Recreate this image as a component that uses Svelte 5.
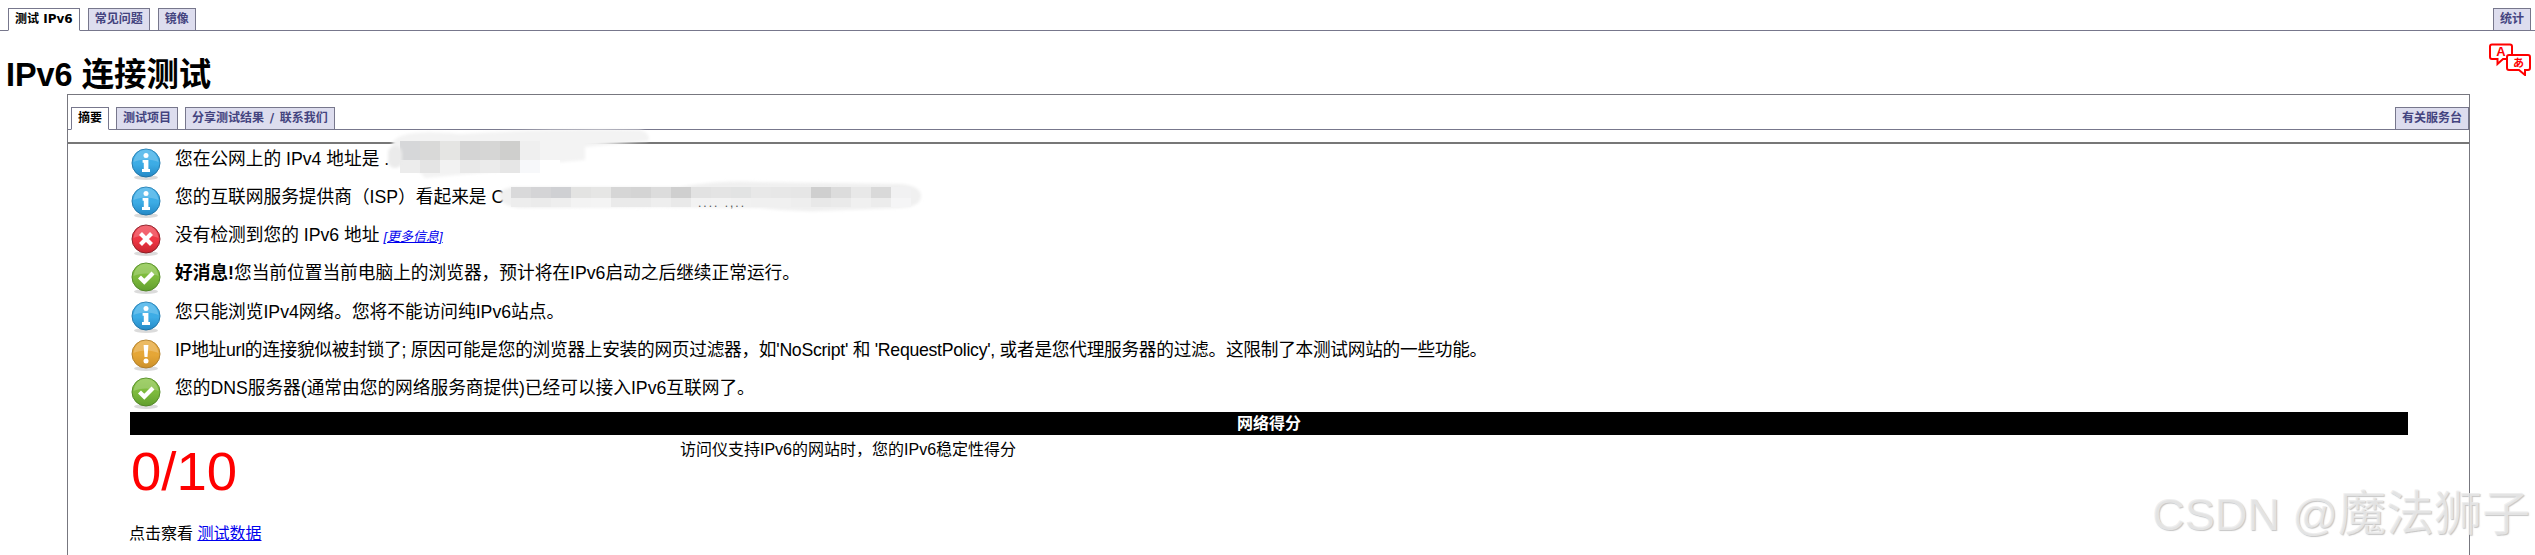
<script>
  const topTabs = ['常见问题', '镜像'];
  const subTabs = ['测试项目', '分享测试结果 / 联系我们'];
  const rows = [
    { icon: 'info', html: '您在公网上的 IPv4 地址是 .' },
    { icon: 'info', html: '您的互联网服务提供商（ISP）看起来是 C' },
    { icon: 'error', html: '没有检测到您的 IPv6 地址', more: true },
    { icon: 'ok', bold: '好消息!', html: '您当前位置当前电脑上的浏览器，预计将在IPv6启动之后继续正常运行。' },
    { icon: 'info', html: '您只能浏览IPv4网络。您将不能访问纯IPv6站点。' },
    { icon: 'warn', tight: true, html: "IP地址url的连接貌似被封锁了; 原因可能是您的浏览器上安装的网页过滤器，如'NoScript' 和 'RequestPolicy', 或者是您代理服务器的过滤。这限制了本测试网站的一些功能。" },
    { icon: 'ok', html: '您的DNS服务器(通常由您的网络服务商提供)已经可以接入IPv6互联网了。' }
  ];
  const mosaic1 = ['#d6d7d9', '#d9d9d8', '#e5e5e3', '#d4d4d4', '#d6d6d5', '#cfcfcd', '#efefef', '#f3f3f3'];
  const mosaic1b = ['#ececec', '#e4e4e4', '#f2f2f2', '#e8e8e8', '#ebebeb', '#e6e6e6', '#f7f8fa', '#ffffff'];
  const mosaic2 = ['#d9d9da', '#d4d4d6', '#cfd0d3', '#e3e3e2', '#e6e6e5', '#d6d6d6', '#d4d4d4', '#dcdcdc', '#cfcfcf', '#e2e2e2', '#e4e4e4', '#e2e3e3', '#e8e8e8', '#e7e7e7', '#e6e6e6', '#cfcfcf', '#dcdcdc', '#e8e8e8', '#d9d9d9', '#f1f1f2'];
  const mosaic2b = ['#ededed', '#ebebeb', '#eeeeee', '#f3f3f3', '#f4f4f4', '#eaeaea', '#eaeaea', '#eeeeee', '#e9e9e9', '#f2f2f2', '#f3f3f3', '#f1f1f1', '#f0f0f0', '#f0f0f0', '#eeeeee', '#e8e8e8', '#eaeaea', '#f0f0f0', '#ececec', '#f5f5f6'];
</script>

{#snippet statusIcon(kind)}
  <svg class="status" viewBox="0 0 32 34" width="32" height="34" aria-hidden="true">
    <ellipse cx="16" cy="30.5" rx="12" ry="2.6" fill="#000" opacity="0.14" />
    <circle cx="16" cy="16" r="14" fill="url(#g-{kind})" stroke="url(#e-{kind})" stroke-width="1" />
    <path d="M3.5 15 C5 6 11 2.6 16 2.6 C21 2.6 27 6 28.5 15 C22 11.5 10 11.5 3.5 15Z" fill="#fff" opacity="0.2" />
    {#if kind === 'info'}
      <circle cx="16" cy="8.6" r="2.5" fill="#fff" />
      <path d="M12.6 13 H18.4 V22 H20 V25 H12 V22 H13.8 V15.8 H12.6Z" fill="#fff" />
    {:else if kind === 'error'}
      <path d="M10.5 10.5 L21.5 21.5 M21.5 10.5 L10.5 21.5" stroke="#fff" stroke-width="4.2" />
    {:else if kind === 'ok'}
      <path d="M9.5 16 L14.3 20.8 L23 12" fill="none" stroke="#fff" stroke-width="4.2" />
    {:else}
      <path d="M13.6 7 H18.4 L17.5 19 H14.5Z" fill="#fff" />
      <circle cx="16" cy="23" r="2.5" fill="#fff" />
    {/if}
  </svg>
{/snippet}

<div class="page">
  <svg class="defs" width="0" height="0" aria-hidden="true">
    <defs>
      <linearGradient id="g-info" x1="0" y1="0" x2="0" y2="1"><stop offset="0" stop-color="#3fb0ea" /><stop offset="0.55" stop-color="#3dace5" /><stop offset="1" stop-color="#2489c6" /></linearGradient>
      <linearGradient id="e-info" x1="0" y1="0" x2="0" y2="1"><stop offset="0" stop-color="#2f86b8" /><stop offset="1" stop-color="#1f72a4" /></linearGradient>
      <linearGradient id="g-error" x1="0" y1="0" x2="0" y2="1"><stop offset="0" stop-color="#f04250" /><stop offset="0.55" stop-color="#ee3644" /><stop offset="1" stop-color="#c8252f" /></linearGradient>
      <linearGradient id="e-error" x1="0" y1="0" x2="0" y2="1"><stop offset="0" stop-color="#8f2730" /><stop offset="1" stop-color="#8a1d25" /></linearGradient>
      <linearGradient id="g-ok" x1="0" y1="0" x2="0" y2="1"><stop offset="0" stop-color="#8ac546" /><stop offset="0.55" stop-color="#7cb93c" /><stop offset="1" stop-color="#619e2e" /></linearGradient>
      <linearGradient id="e-ok" x1="0" y1="0" x2="0" y2="1"><stop offset="0" stop-color="#5b932d" /><stop offset="1" stop-color="#528628" /></linearGradient>
      <linearGradient id="g-warn" x1="0" y1="0" x2="0" y2="1"><stop offset="0" stop-color="#e8aa3e" /><stop offset="0.55" stop-color="#e5a636" /><stop offset="1" stop-color="#cc9029" /></linearGradient>
      <linearGradient id="e-warn" x1="0" y1="0" x2="0" y2="1"><stop offset="0" stop-color="#b68634" /><stop offset="1" stop-color="#ad7d2a" /></linearGradient>
    </defs>
  </svg>

  <nav class="tabs top">
    <span class="tab active first">测试 IPv6</span>
    {#each topTabs as t}<span class="tab">{t}</span>{/each}
    <span class="tab end">统计</span>
  </nav>

  <header class="head">
    <h1>IPv6 连接测试</h1>
    <svg class="lang" viewBox="0 0 44 33" width="44" height="33" aria-hidden="true">
      <path d="M4 1.5 H22 Q24 1.5 24 3.5 V14 Q24 16 22 16 H15 L9.5 21 V16 H4 Q2 16 2 14 V3.5 Q2 1.5 4 1.5Z" fill="#fff" stroke="#f00" stroke-width="2" />
      <text x="13" y="13" class="lang-a">A</text>
      <path d="M21 12 H40 Q42 12 42 14 V25 Q42 27 40 27 H37 V32 L31 27 H21 Q19 27 19 25 V14 Q19 12 21 12Z" fill="#fff" stroke="#f00" stroke-width="2" />
      <text x="30.5" y="24" class="lang-b">あ</text>
    </svg>
  </header>

  <section class="panel">
    <nav class="tabs sub">
      <span class="tab active">摘要</span>
      {#each subTabs as t}<span class="tab wide">{t}</span>{/each}
      <span class="tab end">有关服务台</span>
    </nav>
    <div class="rule"></div>

    <div class="rows">
      {#each rows as r}
        <div class="row">
          {@render statusIcon(r.icon)}
          <p class:tight={r.tight}>{#if r.bold}<strong>{r.bold}</strong>{/if}{r.html}{#if r.more} <a class="more" href="#more">[更多信息]</a>{/if}</p>
        </div>
      {/each}
    </div>

    <div class="bar">网络得分</div>
    <div class="score">
      <div class="num">0/10</div>
      <div class="desc">访问仪支持IPv6的网站时，您的IPv6稳定性得分</div>
    </div>
    <p class="data">点击察看 <a href="#data">测试数据</a></p>
  </section>

  <svg class="mask" width="2535" height="555" aria-hidden="true">
    <defs>
      <filter id="soft"><feGaussianBlur stdDeviation="1.4" /></filter>
    </defs>
    <path d="M392 143 Q400 128 460 134 Q560 128 640 130 Q652 134 648 141 L585 147 L585 160 L540 164 L490 172 L425 178 L420 172 L396 164 Z" fill="#f3f3f3" filter="url(#soft)" />
    {#each mosaic1 as c, i}<rect x={400 + i * 20} y="141" width="20" height="19" fill={c} />{/each}
    {#each mosaic1b as c, i}<rect x={400 + i * 20} y="160" width="20" height="13" fill={c} />{/each}
    <rect x="388" y="146" width="14" height="22" rx="7" fill="#ebebeb" filter="url(#soft)" />
    <path d="M499 195 Q502 186 520 187 L680 187 Q720 180 760 182 L900 184 Q922 186 921 197 Q920 207 900 208 L820 211 Q790 212 760 208 L660 207 L520 208 Q500 206 499 195Z" fill="#f0f0f0" filter="url(#soft)" />
    {#each mosaic2 as c, i}<rect x={511 + i * 20} y="187" width="20" height="11" fill={c} />{/each}
    {#each mosaic2b as c, i}<rect x={511 + i * 20} y="198" width="20" height="9" fill={c} />{/each}
    <text x="698" y="207" class="speck">.... .,..</text>
  </svg>

  <div class="mark"><span class="mark-l">CSDN @</span>魔法狮子</div>
</div>

<style>
  :global(body) {
    margin: 0;
    background: #fff;
  }

  .page {
    position: relative;
    height: 555px;
    overflow: hidden;
    background: #fff;
    color: #000;
    font-family: "Liberation Sans", "Noto Sans CJK SC", sans-serif;
  }

  .defs {
    position: absolute;
  }

  .tabs {
    display: flex;
    align-items: flex-end;
    gap: 8px;
    box-sizing: border-box;
    border-bottom: 1px solid #77778c;
    font-family: "DejaVu Sans", "Noto Sans CJK SC", sans-serif;
    font-size: 12px;
    font-weight: 700;
  }

  .top {
    height: 31px;
    padding: 8px 4px 0 5px;
  }

  .tab {
    box-sizing: border-box;
    height: 23px;
    margin-bottom: -1px;
    padding: 0 6px;
    border: 1px solid #77778c;
    background: #ddddee;
    color: #44447f;
    line-height: 21px;
    white-space: nowrap;
  }

  .tab.wide {
    word-spacing: 1.5px;
  }

  .tab.active {
    background: #fff;
    border-bottom-color: #fff;
    color: #000;
  }

  .tab.first {
    margin-left: 3px;
  }

  .tab.end {
    margin-left: auto;
  }

  .head {
    display: flex;
    justify-content: space-between;
    align-items: flex-start;
    height: 63px;
    padding: 0 3px 0 6px;
  }

  h1 {
    margin: 23px 0 0;
    font-size: 32.4px;
    line-height: 42px;
    font-weight: 700;
  }

  .lang {
    margin-top: 12px;
  }

  .lang-a {
    font: 700 13px "Liberation Sans", sans-serif;
    fill: #f00;
    text-anchor: middle;
  }

  .lang-b {
    font: 700 11px "Noto Sans CJK JP", sans-serif;
    fill: #f00;
    text-anchor: middle;
  }

  .panel {
    box-sizing: border-box;
    height: 461px;
    margin: 0 65px 0 67px;
    border: 1px solid #77777f;
    border-bottom: 0;
  }

  .sub {
    height: 35px;
    padding: 12px 0 0 3px;
    gap: 7px;
  }

  .rule {
    height: 2px;
    margin-top: 12px;
    background: #777;
  }

  .rows {
    padding-left: 62px;
  }

  .row {
    display: flex;
    align-items: flex-start;
    height: 38.17px;
    gap: 13px;
  }

  .status {
    flex: none;
    margin-top: 3px;
  }

  .row p {
    margin: 0;
    font-size: 17.7px;
    line-height: 31px;
    white-space: nowrap;
  }

  .row p.tight {
    letter-spacing: -0.28px;
  }

  .more {
    margin-left: 4px;
    font-size: 13px;
    font-style: italic;
    color: #00e;
  }

  .bar {
    height: 23px;
    margin: 1px 61px 0 62px;
    background: #000;
    color: #fff;
    font-size: 16px;
    font-weight: 700;
    line-height: 23px;
    text-align: center;
  }

  .score {
    display: grid;
    grid-template-columns: 550px 1fr;
    padding-left: 62px;
  }

  .num {
    color: #f00;
    font-size: 54.5px;
    line-height: 62px;
    margin: 6px 0 0 1px;
  }

  .desc {
    font-size: 16px;
    line-height: 22px;
    margin-top: 4px;
  }

  .data {
    margin: 19px 0 0 61px;
    font-size: 16px;
    line-height: 24px;
  }

  .data a {
    color: #00e;
  }

  .mask {
    position: absolute;
    inset: 0;
    pointer-events: none;
  }

  .speck {
    font: 12px "Liberation Sans", sans-serif;
    fill: #555;
    letter-spacing: 2px;
  }

  .mark {
    position: absolute;
    right: 5px;
    top: 484px;
    font-size: 48px;
    line-height: 60px;
    color: rgba(236, 236, 236, 0.8);
    text-shadow: 1px 1px 1px rgba(140, 140, 140, 0.5);
    white-space: nowrap;
  }

  .mark-l {
    font-size: 45px;
  }
</style>
